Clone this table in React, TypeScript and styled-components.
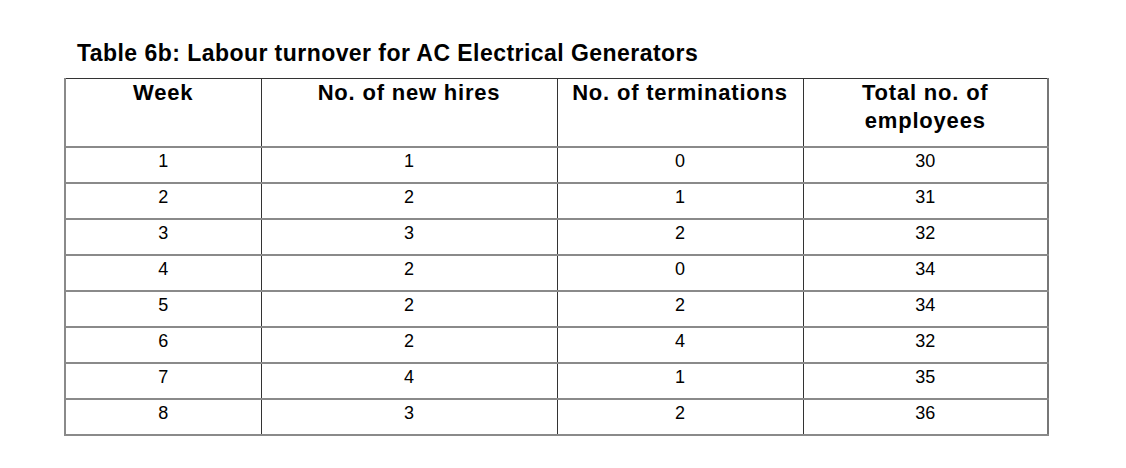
import React from "react";
import styled, { createGlobalStyle } from "styled-components";

const Global = createGlobalStyle`
  html, body { margin: 0; padding: 0; background: #ffffff; }
  body { font-family: "Liberation Sans", Arial, sans-serif; color: #000; }
`;

const Page = styled.div`
  padding: 39px 0 0 64px;
`;

const Title = styled.h1`
  margin: 0 0 11px 13px;
  font-size: 23px;
  line-height: 28px;
  letter-spacing: 0.45px;
  font-weight: bold;
`;

const Table = styled.table`
  border-collapse: collapse;
  width: 983px;
  table-layout: fixed;
  border-top: 1px solid #333;
  border-left: 2px solid #8a8a8a;
  border-right: 2px solid #777;
  border-bottom: 2px solid #8a8a8a;
`;

const Col = styled.col<{ $w: number }>`
  width: ${(p) => p.$w}px;
`;

const Th = styled.th`
  box-sizing: border-box;
  height: 68px;
  padding: 0 4px;
  vertical-align: top;
  font-size: 22px;
  line-height: 28px;
  letter-spacing: 0.8px;
  font-weight: bold;
  text-align: center;
  border-left: 1px solid #333;
  border-bottom: 2px solid #8a8a8a;
  &:first-child { border-left: none; }
`;

const Td = styled.td`
  box-sizing: border-box;
  height: 36px;
  padding: 0 4px;
  vertical-align: top;
  font-size: 18px;
  line-height: 27px;
  text-align: center;
  border-left: 1px solid #333;
  border-bottom: 2px solid #8a8a8a;
  &:first-child { border-left: none; }
`;

const columns = [
  { label: "Week", w: 196 },
  { label: "No. of new hires", w: 296 },
  { label: "No. of terminations", w: 246 },
  { label: "Total no. of employees", w: 245 },
];

const rows = [
  [1, 1, 0, 30],
  [2, 2, 1, 31],
  [3, 3, 2, 32],
  [4, 2, 0, 34],
  [5, 2, 2, 34],
  [6, 2, 4, 32],
  [7, 4, 1, 35],
  [8, 3, 2, 36],
];

export default function App() {
  return (
    <Page>
      <Global />
      <Title>Table 6b: Labour turnover for AC Electrical Generators</Title>
      <Table>
        <colgroup>
          {columns.map((c) => (
            <Col key={c.label} $w={c.w} />
          ))}
        </colgroup>
        <thead>
          <tr>
            {columns.map((c) => (
              <Th key={c.label}>
                {c.label === "Total no. of employees" ? (
                  <>
                    Total no. of
                    <br />
                    employees
                  </>
                ) : (
                  c.label
                )}
              </Th>
            ))}
          </tr>
        </thead>
        <tbody>
          {rows.map((r) => (
            <tr key={r[0]}>
              {r.map((v, i) => (
                <Td key={i}>{v}</Td>
              ))}
            </tr>
          ))}
        </tbody>
      </Table>
    </Page>
  );
}
